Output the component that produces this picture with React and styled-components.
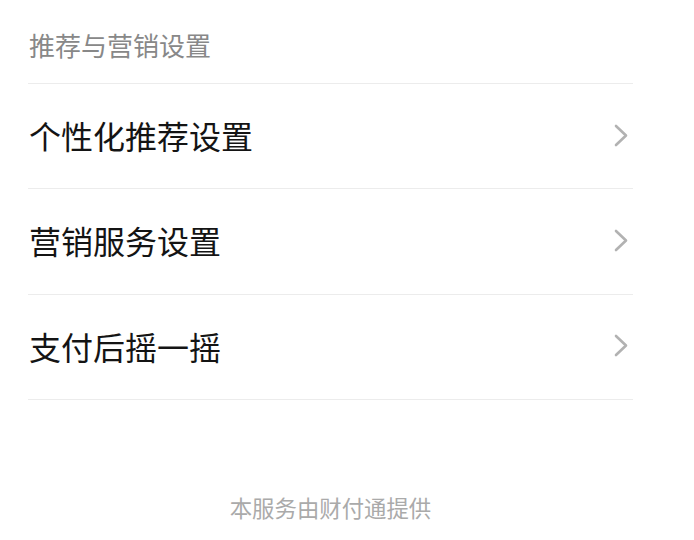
import React from "react";
import styled, { createGlobalStyle } from "styled-components";

const GlobalStyle = createGlobalStyle`
  body {
    margin: 0;
    background: #ffffff;
    font-family: "Noto Sans CJK SC", "Noto Sans", sans-serif;
  }
`;

const items = ["个性化推荐设置", "营销服务设置", "支付后摇一摇"];

const Chevron = () => (
  <svg width="14" height="23" viewBox="0 0 14 23" fill="none">
    <polyline
      points="2,2 12,11.5 2,21"
      stroke="#b2b2b2"
      strokeWidth="2.6"
      strokeLinecap="round"
      strokeLinejoin="round"
    />
  </svg>
);

export default function App() {
  return (
    <Page>
      <GlobalStyle />
      <List>
        <SectionTitle>推荐与营销设置</SectionTitle>
        {items.map((label) => (
          <Row key={label}>
            <RowLabel>{label}</RowLabel>
            <Chevron />
          </Row>
        ))}
        <Footer>本服务由财付通提供</Footer>
      </List>
    </Page>
  );
}

const Page = styled.div`
  width: 694px;
  height: 540px;
  background: #ffffff;
`;

const List = styled.div`
  margin-left: 28px;
  width: 605px;
  display: flex;
  flex-direction: column;
`;

const SectionTitle = styled.div`
  height: 84px;
  box-sizing: border-box;
  padding-top: 29px;
  padding-left: 1px;
  font-size: 26px;
  line-height: 32px;
  color: #888888;
  border-bottom: 1px solid #ececec;
`;

const Row = styled.div`
  height: 105.3px;
  box-sizing: border-box;
  display: flex;
  align-items: center;
  justify-content: space-between;
  padding: 0 5px 2px 1px;
  border-bottom: 1px solid #ececec;
`;

const RowLabel = styled.span`
  font-size: 32px;
  line-height: 40px;
  color: #141414;
`;

const Footer = styled.div`
  margin-top: 92px;
  text-align: center;
  font-size: 22.4px;
  line-height: 30px;
  color: #aaaaaa;
`;
